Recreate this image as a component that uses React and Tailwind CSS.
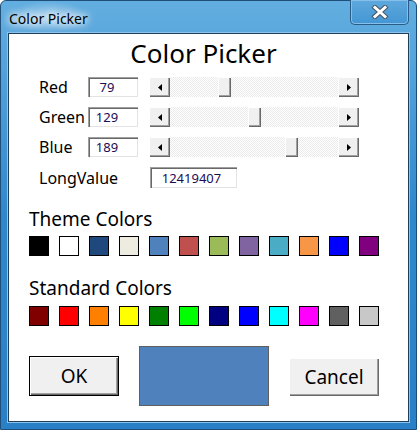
import React from 'react';

const themeColors = ['#000000', '#ffffff', '#1f497d', '#eeece1', '#4f81bd', '#c0504d', '#9bbb59', '#8064a2', '#4bacc6', '#f79646', '#0000ff', '#800080'];
const standardColors = ['#800000', '#ff0000', '#ff8000', '#ffff00', '#008000', '#00ff00', '#000080', '#0000ff', '#00ffff', '#ff00ff', '#606060', '#c8c8c8'];

const channels = [
  { label: 'Red', value: 79 },
  { label: 'Green', value: 129 },
  { label: 'Blue', value: 189 },
];

// Classic 3D edges
const raised = 'bg-[#f0f0f0] shadow-[inset_1px_1px_0_#ffffff,inset_-1px_-1px_0_#696969,inset_-2px_-2px_0_#a0a0a0]';
const sunken = 'bg-white shadow-[inset_1px_1px_0_#a0a0a0,inset_2px_2px_0_#696969,inset_-1px_-1px_0_#e3e3e3]';

const Arrow = ({ dir }) => (
  <svg width="4" height="7" viewBox="0 0 4 7">
    <path d={dir === 'left' ? 'M4 0 L0 3.5 L4 7 Z' : 'M0 0 L4 3.5 L0 7 Z'} fill="#000" />
  </svg>
);

const ScrollBar = ({ value }) => {
  // track is 168px, thumb 13px
  const offset = Math.round(((168 - 13) * value) / 255);
  return (
    <div className="flex w-[210px] h-[20px]">
      <div className={`w-[21px] h-full flex items-center justify-center ${raised}`}>
        <Arrow dir="left" />
      </div>
      <div className="flex-1 h-full flex bg-[repeating-conic-gradient(#ebebeb_0_25%,#ffffff_0_50%)] bg-[length:2px_2px]">
        <div className={`w-[13px] h-full ${raised}`} style={{ marginLeft: offset }} />
      </div>
      <div className={`w-[21px] h-full flex items-center justify-center ${raised}`}>
        <Arrow dir="right" />
      </div>
    </div>
  );
};

const Swatches = ({ colors }) => (
  <div className="flex gap-[10px] pl-[20px]">
    {colors.map((c, i) => (
      <div key={i} className="w-[20px] h-[20px] border border-black" style={{ backgroundColor: c }} />
    ))}
  </div>
);

const App = () => {
  return (
    <div className="w-[417px] h-[430px] flex flex-col border border-[#1f4e79] rounded-t-[6px] bg-linear-to-b from-[#62aee0] via-[#2f88cc] to-[#2a80c6] px-[7px] pb-[7px] font-['Noto_Sans',sans-serif] text-black">
      {/* Title bar */}
      <div className="h-[32px] flex justify-between shrink-0">
        <div className="pl-[1px] pt-[8px] text-[14px] leading-[20px] rounded-full bg-[radial-gradient(closest-side,rgba(255,255,255,0.45),rgba(255,255,255,0))] [text-shadow:0_0_6px_#fff,0_0_10px_#fff,0_0_14px_#fff]">
          Color Picker
        </div>
        <div className="-mt-px w-[59px] h-[25px] rounded-b-[5px] border border-t-0 border-[#2a5a86] shadow-[inset_0_0_0_1px_#86bfea] bg-linear-to-b from-[#5ea8dd] to-[#4396d4] flex items-center justify-center">
          <svg width="18" height="14" viewBox="0 0 18 14">
            <path d="M4 2.5 L14 11.5 M14 2.5 L4 11.5" stroke="#4a5663" strokeWidth="5" strokeLinecap="square" />
            <path d="M4 2.5 L14 11.5 M14 2.5 L4 11.5" stroke="#ffffff" strokeWidth="3" strokeLinecap="square" />
          </svg>
        </div>
      </div>

      {/* Client area */}
      <div className="flex-1 bg-white border border-[#1e3f5a] shadow-[0_0_0_1px_#8cc3ec] flex flex-col">
        <div className="h-[43px] pt-[4px] pr-[10px] text-center text-[26px] leading-[30px]">Color Picker</div>

        <div className="flex flex-col gap-[10px] pl-[30px]">
          {channels.map((ch) => (
            <div key={ch.label} className="flex items-center h-[20px]">
              <div className="w-[49px] text-[16px] leading-[20px]">{ch.label}</div>
              <div className={`w-[50px] h-[20px] pr-[12px] text-center text-[13px] leading-[21px] text-[#1c0d55] ${sunken}`}>
                {ch.value}
              </div>
              <div className="ml-[11px]">
                <ScrollBar value={ch.value} />
              </div>
            </div>
          ))}
          <div className="flex items-center h-[21px]">
            <div className="w-[111px] text-[16px] leading-[20px]">LongValue</div>
            <div className={`w-[87px] h-[21px] pr-[4px] text-center text-[13px] leading-[22px] text-[#1c0d55] ${sunken}`}>
              12419407
            </div>
          </div>
        </div>

        <div className="mt-[19px] pl-[20px] text-[19px] leading-[24px]">Theme Colors</div>
        <div className="mt-[5px]">
          <Swatches colors={themeColors} />
        </div>

        <div className="mt-[20px] pl-[20px] text-[19px] leading-[24px]">Standard Colors</div>
        <div className="mt-[6px]">
          <Swatches colors={standardColors} />
        </div>

        <div className="mt-[20px] pl-[20px] flex items-start gap-[20px]">
          <button className="mt-[10px] w-[90px] h-[40px] border border-black bg-[#f0f0f0] shadow-[inset_1px_1px_0_#ffffff,inset_-1px_-1px_0_#696969,inset_-2px_-2px_0_#a0a0a0] text-[19px] leading-[24px]">
            OK
          </button>
          <div className="w-[130px] h-[60px] bg-[#4f81bd] border border-[#606060]" />
          <button className={`mt-[12px] w-[90px] h-[38px] text-[19px] leading-[24px] ${raised}`}>
            Cancel
          </button>
        </div>
      </div>
    </div>
  );
};

export default App;
